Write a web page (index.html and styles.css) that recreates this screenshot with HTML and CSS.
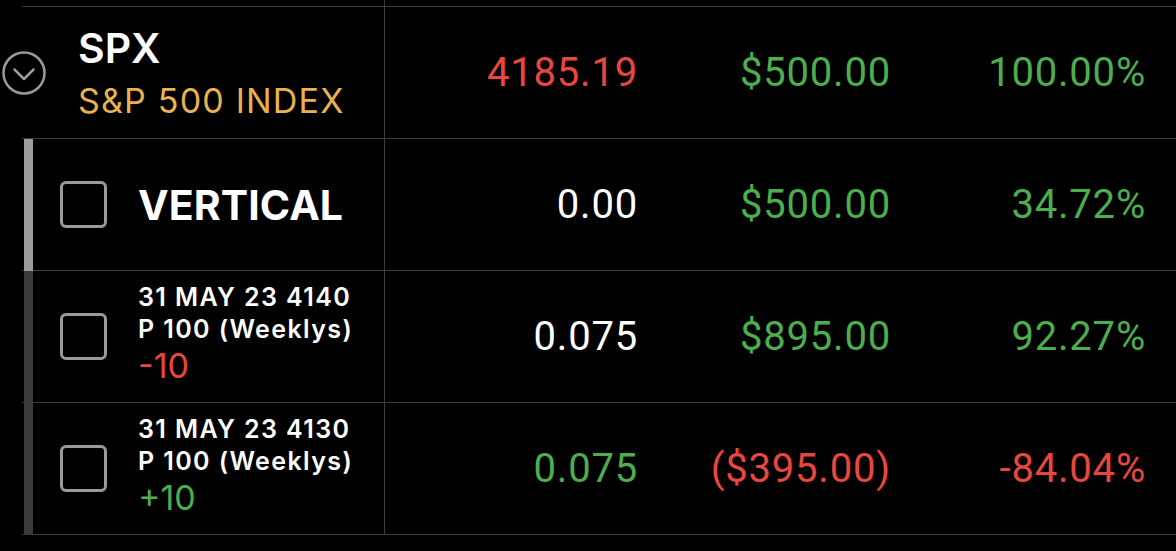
FILE: index.html
```html
<!DOCTYPE html>
<html lang="en">
<head>
    <meta charset="UTF-8">
    <meta name="viewport" content="width=device-width, initial-scale=1.0">
    <title>Positions - SPX</title>
    <link rel="stylesheet" href="styles.css">
</head>
<body>
    <div class="positions">
        <div class="cap-row"><div class="cap-cell"></div></div>

        <!-- underlying -->
        <div class="row underlying">
            <div class="name-cell">
                <svg class="toggle" width="48" height="48" viewBox="0 0 48 48">
                    <circle cx="24" cy="24" r="20.5" fill="none" stroke="#9a9a9a" stroke-width="2.5"/>
                    <polyline points="14.5,20.5 24,30 33.5,20.5" fill="none" stroke="#9a9a9a" stroke-width="2.5" stroke-linecap="round" stroke-linejoin="round"/>
                </svg>
                <div class="symbol">
                    <div class="ticker">SPX</div>
                    <div class="desc">S&amp;P 500 INDEX</div>
                </div>
            </div>
            <div class="num red">4185.19</div>
            <div class="num green">$500.00</div>
            <div class="num green">100.00%</div>
        </div>

        <!-- strategy -->
        <div class="row strategy">
            <div class="name-cell">
                <span class="bar"></span>
                <span class="check"></span>
                <div class="strategy-name">VERTICAL</div>
            </div>
            <div class="num">0.00</div>
            <div class="num green">$500.00</div>
            <div class="num green">34.72%</div>
        </div>

        <!-- legs -->
        <div class="row leg">
            <div class="name-cell">
                <span class="bar"></span>
                <span class="check"></span>
                <div class="leg-text">
                    <div class="contract">31 MAY 23 4140</div>
                    <div class="contract">P 100 (Weeklys)</div>
                    <div class="qty red">-10</div>
                </div>
            </div>
            <div class="num">0.075</div>
            <div class="num green">$895.00</div>
            <div class="num green">92.27%</div>
        </div>

        <div class="row leg">
            <div class="name-cell">
                <span class="bar"></span>
                <span class="check"></span>
                <div class="leg-text">
                    <div class="contract">31 MAY 23 4130</div>
                    <div class="contract">P 100 (Weeklys)</div>
                    <div class="qty green">+10</div>
                </div>
            </div>
            <div class="num green">0.075</div>
            <div class="num red">($395.00)</div>
            <div class="num red">-84.04%</div>
        </div>
    </div>
</body>
</html>
```

FILE: styles.css
```css
* {
    box-sizing: border-box;
}

body {
    margin: 0;
    background: #000;
    color: #fff;
    font-family: Inter, "Noto Sans", sans-serif;
    overflow: hidden;
}

.positions {
    margin-left: 22px;
}

.cap-row {
    height: 7px;
    border-bottom: 1px solid #3c3c3c;
}

.cap-cell {
    width: 363px;
    height: 100%;
    border-right: 1px solid #3c3c3c;
}

.row {
    display: grid;
    grid-template-columns: 363px 253px 253px 255px;
    height: 132px;
    padding-right: 30px;
    border-bottom: 1px solid #3c3c3c;
}

.name-cell {
    display: flex;
    align-items: center;
    border-right: 1px solid #3c3c3c;
}

.num {
    display: flex;
    align-items: center;
    justify-content: flex-end;
    font-family: Roboto, "Liberation Sans", sans-serif;
    font-weight: 400;
    font-size: 40px;
    letter-spacing: 0.8px;
}

.red {
    color: #e8473f;
}

.green {
    color: #4dae4d;
}

/* underlying row */
.toggle {
    margin-left: -22px;
    flex-shrink: 0;
}

.symbol {
    margin-left: 30px;
}

.ticker {
    font-size: 41px;
    font-weight: 600;
    line-height: 50px;
}

.desc {
    margin-top: 6px;
    font-size: 34px;
    line-height: 44px;
    color: #e9b24f;
    letter-spacing: 1.2px;
}

/* strategy + legs */
.bar {
    align-self: stretch;
    width: 9px;
    margin-left: 2px;
    margin-bottom: -1px;
    background: #3b3b3b;
    flex-shrink: 0;
}

.strategy .bar {
    background: #9c9c9c;
}

.check {
    width: 47px;
    height: 47px;
    margin-left: 27px;
    border: 3px solid #9a9a9a;
    border-radius: 6px;
    flex-shrink: 0;
}

.strategy-name {
    margin-left: 31px;
    font-size: 41px;
    font-weight: 700;
    letter-spacing: 0.1px;
}

.leg-text {
    margin-left: 31px;
    margin-bottom: 6px;
}

.contract {
    font-size: 25px;
    font-weight: 600;
    line-height: 32px;
    letter-spacing: 1.4px;
}

.qty {
    font-size: 34px;
    line-height: 41px;
}
```
